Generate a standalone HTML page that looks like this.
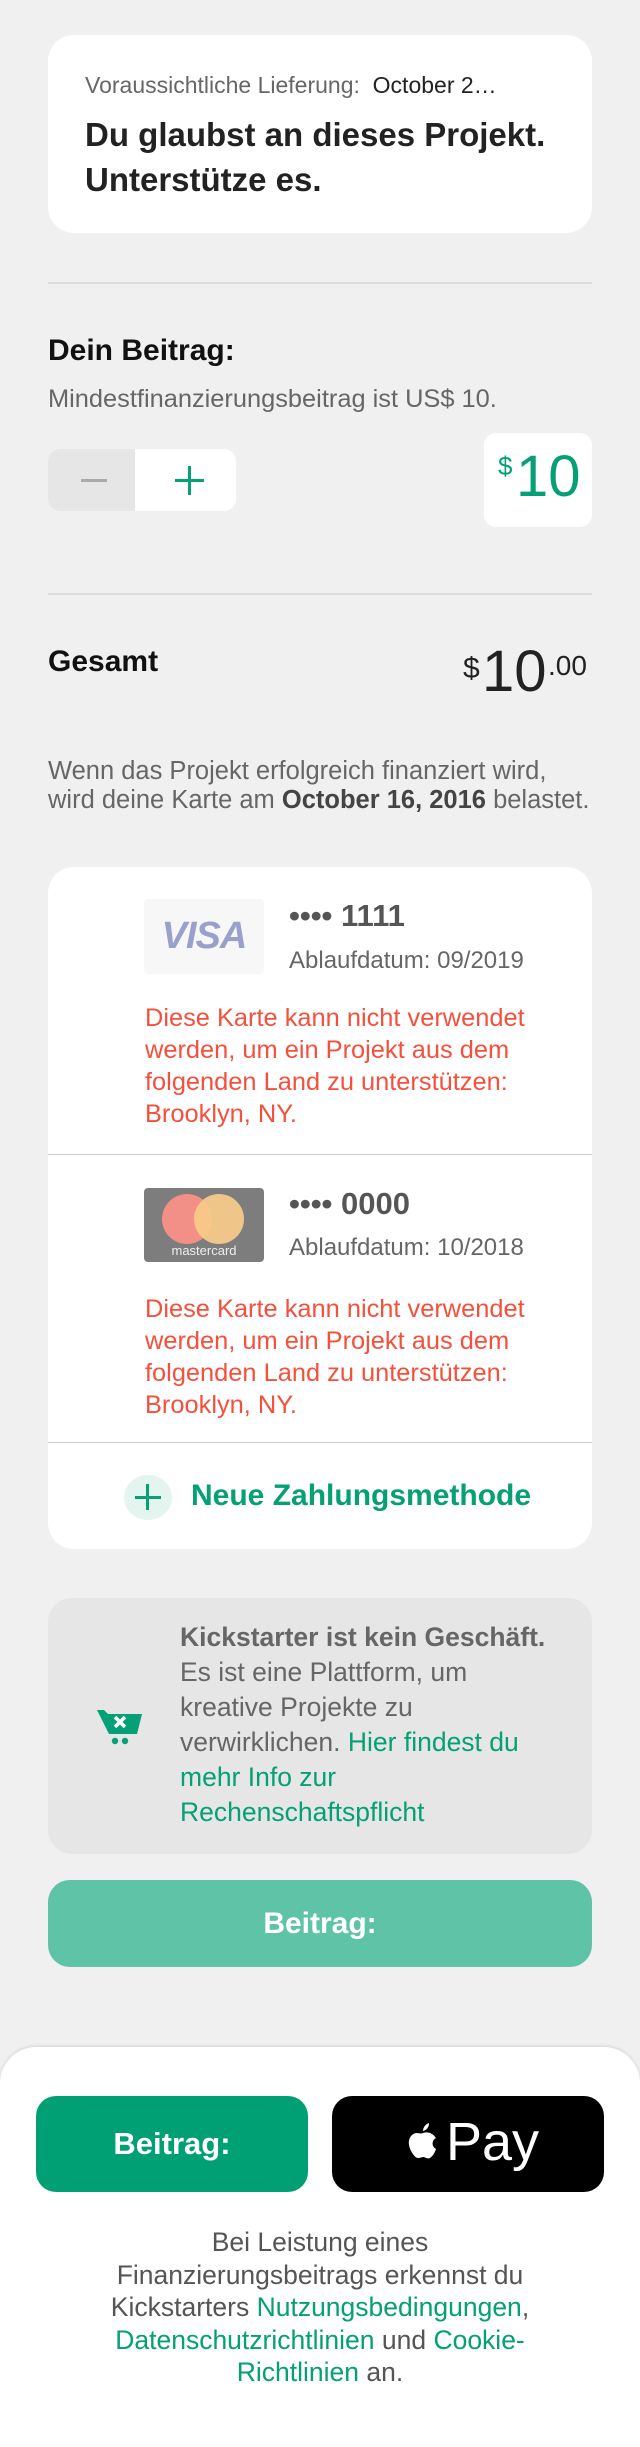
<!DOCTYPE html>
<html><head><meta charset="utf-8"><style>
*{box-sizing:border-box;margin:0;padding:0}
body{width:640px;height:2400px;background:#f0f0f0;font-family:"Liberation Sans",sans-serif;position:relative;overflow:hidden;color:#222}
.abs{position:absolute;white-space:nowrap}
.card{background:#fff;border-radius:26px}
.grey{color:#666}
.green{color:#05a075}
.red{color:#f5503c;font-size:25.4px;line-height:32px}
.hr{height:2px;background:#dcdcdc;left:48px;width:544px}
</style></head><body>
<div class="abs card" style="left:48px;top:35px;width:544px;height:198px"></div>
<div class="abs" style="left:85px;top:72px;font-size:23px;width:462px;overflow:hidden;text-overflow:ellipsis"><span class="grey">Voraussichtliche Lieferung:</span>&nbsp; <span style="color:#222">October 2…</span></div>
<div class="abs" style="left:85px;top:112px;font-size:33px;font-weight:bold;line-height:45px;color:#222">Du glaubst an dieses Projekt.<br>Unterstütze es.</div>
<div class="abs hr" style="top:282px"></div>
<div class="abs" style="left:48px;top:334px;font-size:30px;font-weight:bold;color:#111">Dein Beitrag:</div>
<div class="abs grey" style="left:48px;top:385px;font-size:25.4px">Mindestfinanzierungsbeitrag ist US$ 10.</div>
<div class="abs" style="left:48px;top:449px;width:188px;height:62px;border-radius:12px;background:#fff;overflow:hidden">
 <div style="position:absolute;left:0;top:0;width:87px;height:62px;background:#e6e6e6"></div>
 <div style="position:absolute;left:33px;top:30px;width:26px;height:3px;background:#aaa"></div>
 <div style="position:absolute;left:127px;top:30px;width:29px;height:3px;background:#05a075"></div>
 <div style="position:absolute;left:140px;top:17px;width:3px;height:29px;background:#05a075"></div>
</div>
<div class="abs" style="left:484px;top:433px;width:108px;height:94px;background:#fff;border-radius:12px"></div>
<div class="abs green" style="left:498px;top:451px;font-size:26px">$</div>
<div class="abs green" style="left:516px;top:445px;font-size:58px;line-height:64px">10</div>
<div class="abs hr" style="top:593px"></div>
<div class="abs" style="left:48px;top:645px;font-size:30px;font-weight:bold;color:#111">Gesamt</div>
<div class="abs" style="left:463px;top:652px;font-size:30px;color:#222">$</div>
<div class="abs" style="left:482px;top:640px;font-size:58px;line-height:64px;color:#222">10</div>
<div class="abs" style="left:548px;top:650px;font-size:28px;color:#222">.00</div>
<div class="abs grey" style="left:48px;top:757px;font-size:25.5px;line-height:29px">Wenn das Projekt erfolgreich finanziert wird,<br>wird deine Karte am <b style="color:#444">October 16, 2016</b> belastet.</div>

<div class="abs card" style="left:48px;top:867px;width:544px;height:682px"></div>
<div class="abs" style="left:144px;top:899px;width:120px;height:75px;background:#f7f7f7;border-radius:4px;text-align:center;font:italic bold 38px 'Liberation Sans',sans-serif;color:#9aa0cc;line-height:75px;letter-spacing:-1px">VISA</div>
<div class="abs" style="left:289px;top:898px;font-size:31px;font-weight:bold;color:#555">•••• 1111</div>
<div class="abs grey" style="left:289px;top:947px;font-size:24px">Ablaufdatum: 09/2019</div>
<div class="abs red" style="left:145px;top:1002px">Diese Karte kann nicht verwendet<br>werden, um ein Projekt aus dem<br>folgenden Land zu unterstützen:<br>Brooklyn, NY.</div>
<div class="abs" style="left:48px;top:1154px;width:544px;height:1px;background:#ccc"></div>
<div class="abs" style="left:144px;top:1188px;width:120px;height:74px;background:#7d7d7d;border-radius:4px;overflow:hidden">
 <div style="position:absolute;left:18px;top:6px;width:50px;height:50px;border-radius:50%;background:#f28f86"></div>
 <div style="position:absolute;left:50px;top:6px;width:50px;height:50px;border-radius:50%;background:#f9cb8a;opacity:.92"></div>
 <div style="position:absolute;left:0;width:120px;top:55px;text-align:center;color:#eee;font-size:13px">mastercard</div>
</div>
<div class="abs" style="left:289px;top:1186px;font-size:31px;font-weight:bold;color:#555">•••• 0000</div>
<div class="abs grey" style="left:289px;top:1234px;font-size:24px">Ablaufdatum: 10/2018</div>
<div class="abs red" style="left:145px;top:1293px">Diese Karte kann nicht verwendet<br>werden, um ein Projekt aus dem<br>folgenden Land zu unterstützen:<br>Brooklyn, NY.</div>
<div class="abs" style="left:48px;top:1442px;width:544px;height:1px;background:#ccc"></div>
<div class="abs" style="left:124px;top:1475px;width:48px;height:45px;border-radius:50%;background:#e3f5ee"></div>
<div class="abs" style="left:135px;top:1496px;width:26px;height:3px;background:#05a075"></div>
<div class="abs" style="left:146px;top:1484px;width:3px;height:26px;background:#05a075"></div>
<div class="abs green" style="left:191px;top:1479px;font-size:30px;font-weight:bold">Neue Zahlungsmethode</div>

<div class="abs" style="left:48px;top:1598px;width:544px;height:256px;background:#e6e6e6;border-radius:24px"></div>
<svg class="abs" style="left:96px;top:1708px" width="48" height="38" viewBox="0 0 48 38"><path d="M1 2h7l4 4h34l-5 20H13z" fill="#05a075"/><path d="M19 9l10 10M29 9L19 19" stroke="#fff" stroke-width="3.5"/><circle cx="19" cy="33" r="3.2" fill="#05a075"/><circle cx="29" cy="33" r="3.2" fill="#05a075"/></svg>
<div class="abs" style="left:180px;top:1620px;font-size:26.5px;line-height:35px;color:#666"><b>Kickstarter ist kein Geschäft.</b><br>Es ist eine Plattform, um<br>kreative Projekte zu<br>verwirklichen. <span class="green">Hier findest du<br>mehr Info zur<br>Rechenschaftspflicht</span></div>
<div class="abs" style="left:48px;top:1880px;width:544px;height:87px;border-radius:22px;background:#5fc3a8;color:#fff;font-size:30px;font-weight:bold;text-align:center;line-height:87px">Beitrag:</div>

<div class="abs" style="left:0;top:2047px;width:640px;height:400px;background:#fff;border-radius:36px 36px 0 0;box-shadow:0 -1px 3px rgba(0,0,0,.12)"></div>
<div class="abs" style="left:36px;top:2096px;width:272px;height:96px;border-radius:20px;background:#00a074;color:#fff;font-size:31px;font-weight:bold;text-align:center;line-height:96px">Beitrag:</div>
<div class="abs" style="left:332px;top:2096px;width:272px;height:96px;border-radius:20px;background:#000;color:#fff;text-align:center">
 <svg style="position:absolute;left:74px;top:27px" width="34" height="38" viewBox="0 0 34 38"><path d="M17 10c3-1 6-1 9 1 2 1 3 3 4 4-4 2-5 8 0 11-1 3-3 7-6 9-2 1-4 0-6-1-2 0-4 1-6 1-3 0-8-7-9-13-1-6 2-11 7-12 3 0 5 1 7 0zM17 8c0-4 3-7 6-8 0 4-2 7-6 8z" fill="#fff"/></svg>
 <div style="position:absolute;left:114px;top:15px;font-size:54px;color:#fff">Pay</div>
</div>
<div class="abs" style="left:40px;top:2226px;width:560px;text-align:center;font-size:26.5px;line-height:32.5px;color:#555">Bei Leistung eines<br>Finanzierungsbeitrags erkennst du<br>Kickstarters <span class="green">Nutzungsbedingungen</span>,<br><span class="green">Datenschutzrichtlinien</span> und <span class="green">Cookie-<br>Richtlinien</span> an.</div>
</body></html>
